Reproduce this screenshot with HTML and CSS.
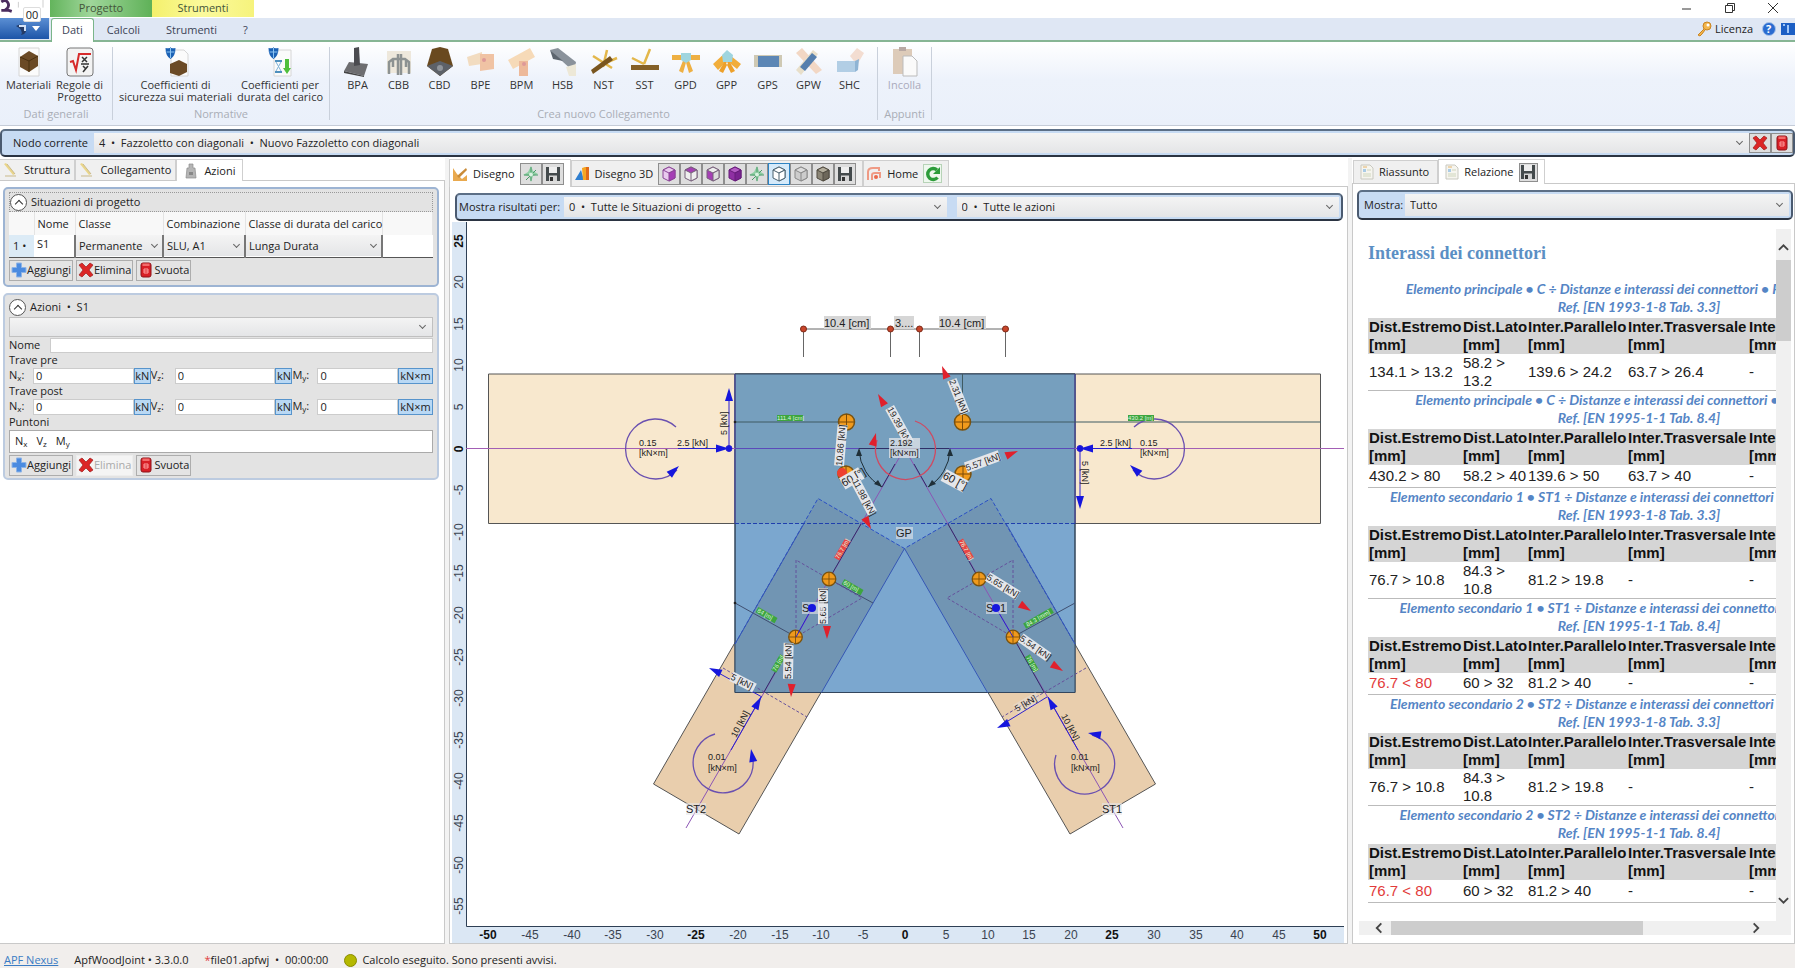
FILE: index.html
```html
<!DOCTYPE html>
<html lang="it">
<head>
<meta charset="UTF-8">
<title>ApfWoodJoint</title>
<link rel="stylesheet" href="styles.css">
</head>
<body>

<!-- shared icons -->
<svg class="defs" aria-hidden="true">
  <symbol id="i-x" viewBox="0 0 16 16"><path d="M1 3l3-2 4 4 4-4 3 2-4 5 4 5-3 2-4-4-4 4-3-2 4-5z" fill="#dc2626" stroke="#9c1c1c" stroke-width=".7"/></symbol>
  <symbol id="i-bin" viewBox="0 0 16 16"><rect x="3" y="1" width="10" height="14" rx="2" fill="#d81f26" stroke="#8d1218"/><rect x="4.500" y="1.500" width="7" height="2.500" fill="#f36b6b"/><path d="M6 7h4v4H6zM6 9h4" fill="none" stroke="#ff9d9d"/></symbol>
  <symbol id="i-plus" viewBox="0 0 16 16"><path d="M5.500 1h5v4.500H15v5h-4.500V15h-5v-4.500H1v-5h4.500z" fill="#4b8be0" stroke="#8fb4e6"/></symbol>
  <symbol id="i-save" viewBox="0 0 16 16"><path d="M1 1h14v14H1z" fill="#444a4c"/><path d="M4 1h8v6H4z" fill="#eee"/><path d="M4 9.500h8V15H4z" fill="#d5d5d5"/><path d="M5 11h3v4H5z" fill="#333"/></symbol>
  <symbol id="i-axes" viewBox="0 0 16 16"><path d="M8 0l2 5 5 3-5 2-2 6-2-6-6-1 5-3z" fill="#8fcfa4"/><path d="M8 1v14M1 9h14M3 14L13 4" stroke="#4c9a6b" fill="none"/><circle cx="8" cy="8.500" r="2" fill="#d8f2e0"/></symbol>
  <symbol id="i-cube" viewBox="0 0 16 16"><path d="M2 4l6-3 6 3v8l-6 3-6-3z" fill="var(--side)" stroke="var(--edge)"/><path d="M2 4l6-3 6 3-6 3z" fill="var(--top)" stroke="var(--edge)"/><path d="M8 7l6-3v8l-6 3z" fill="var(--face)" stroke="var(--edge)"/></symbol>
  <symbol id="i-ruler" viewBox="0 0 16 16"><path d="M3 1l9 11-2 1L1 2z" fill="#ead68a"/><path d="M13 14H2M12 12L4 2" stroke="#c9b98a" fill="none"/></symbol>
  <symbol id="i-weight" viewBox="0 0 16 16"><path d="M6 1h4v4h2l1 10H3L4 5h2z" fill="#b5b5b5" stroke="#8d8d8d" stroke-width=".7"/><path d="M6 9h4v3H6z" fill="#888"/></symbol>
  <symbol id="i-doc" viewBox="0 0 16 16"><path d="M2 1h9l3 3v11H2z" fill="#f6f5ef" stroke="#c9c9c0"/><path d="M4 5h3v3H4z" fill="#a9cbe6"/><path d="M8 6h4M4 10h8M4 12h8" stroke="#cfd6bd"/><path d="M4 3h4" stroke="#e3b46c"/></symbol>
  <symbol id="i-draw" viewBox="0 0 16 16"><path d="M1 2v13h14V9l-5 4-5-5z" fill="#e9a94e"/><path d="M5 10L14 2l1 2-8 8z" fill="#c98b38"/></symbol>
  <symbol id="i-3d" viewBox="0 0 16 16"><path d="M1 14l6-10 3 10z" fill="#2f7fd0"/><path d="M8 2l3-1h4v13H9z" fill="#f5a623"/><path d="M12 1h3v13h-3z" fill="#e06a1a"/></symbol>
  <symbol id="i-home" viewBox="0 0 16 16"><path d="M2 14V6q0-4 5-4h6v3M6 14V9q0-2 3-2h5v5" fill="none" stroke="#ef9a84" stroke-width="2"/><circle cx="10" cy="11" r="2" fill="#ea6a4c"/></symbol>
  <symbol id="i-reload" viewBox="0 0 16 16"><path d="M12.500 11.500A5.500 5.500 0 1 1 12 4" fill="none" stroke="#2d9c3a" stroke-width="3.400"/><path d="M15 1v7H8z" fill="#2d9c3a"/></symbol>
  <symbol id="i-shield" viewBox="0 0 10 12"><path d="M0 1q5 1 5-1 0 2 5 1 0 8-5 11Q0 9 0 1z" fill="#1c62b5"/><path d="M5 1v10M1 5h8" stroke="#8cc4f2"/></symbol>
</svg>

<header class="titlebar">
  <svg class="app-mark" viewBox="0 0 50 19"><path d="M0 2q5-3 7 1t-2 7l6 2M0 11h8" fill="none" stroke="#4a2b5e" stroke-width="3"/><path d="M18 2v6M44 0v8" stroke="#ccc"/></svg>
  <span class="ctx ctx-green">Progetto</span>
  <span class="ctx ctx-yellow">Strumenti</span>
  <div class="win-buttons">
    <button aria-label="Riduci"><svg viewBox="0 0 12 12"><path d="M1 7h9" stroke="#333"/></svg></button>
    <button aria-label="Ripristina"><svg viewBox="0 0 12 12"><path d="M1.500 3.500h7v7h-7zM3.500 3V1.500h7v7H9" fill="none" stroke="#333"/></svg></button>
    <button aria-label="Chiudi"><svg viewBox="0 0 12 12"><path d="M1 1l10 10M11 1L1 11" stroke="#333"/></svg></button>
  </div>
</header>

<nav class="tabstrip">
  <button class="file-btn" aria-label="File"><svg viewBox="0 0 30 14"><path d="M2 4q6-4 10 2 1 6-5 7 3-5-5-9z" fill="#243b66"/><path d="M5 4h6v5" fill="none" stroke="#d3e1f6" stroke-width="2"/><path d="M18 4h8l-4 5z" fill="#fff"/></svg></button>
  <span class="keytip">00</span>
  <button class="rtab active">Dati</button>
  <button class="rtab">Calcoli</button>
  <button class="rtab">Strumenti</button>
  <button class="rtab">?</button>
  <div class="strip-right">
    <svg class="ico" viewBox="0 0 16 16"><circle cx="10" cy="5" r="4" fill="#f3b64c" stroke="#c98420"/><circle cx="11" cy="4" r="1.500" fill="#fff"/><path d="M7 8l-6 6 2 1 2-2 3-4" fill="#f3b64c" stroke="#c98420"/></svg>
    <a href="#licenza">Licenza</a>
    <svg class="ico" viewBox="0 0 16 16"><circle cx="8" cy="8" r="6.500" fill="#2a6bd0" stroke="#a9c4ea"/><text x="5" y="12" fill="#fff" font-size="11" font-weight="bold">?</text></svg>
    <svg class="ico" viewBox="0 0 16 16"><path d="M2 2h14v12H2z" fill="#1c5fc4"/><path d="M9 4v8M4 4h2" stroke="#9fc6f7" stroke-width="2"/></svg>
  </div>
</nav>

<section class="ribbon">
  <div class="rgroup g-dati">
    <div class="items">
      <button class="big"><svg viewBox="0 0 30 30"><path d="M5 1h20v28H5z" fill="#fbfbfb" stroke="#d6d6d6"/><path d="M6 10l9-6 9 5v10l-9 6-9-5z" fill="#6b4a25"/><path d="M6 10l9 4 9-5M15 14v11" stroke="#49300f" fill="none"/></svg>Materiali</button>
      <button class="big"><svg viewBox="0 0 30 30"><rect x="2" y="1" width="26" height="28" rx="3" fill="#f3f3f3" stroke="#777"/><path d="M5 15l3-1 3 9L14 7h12" fill="none" stroke="#d62a2a" stroke-width="2"/><path d="M17 10l5 5M22 10l-5 5M16 17h8M18 19l3 3M23 19l-5 6" stroke="#333" stroke-width="1.500"/></svg>Regole di<br>Progetto</button>
    </div>
    <div class="gname">Dati generali</div>
  </div>
  <div class="rgroup g-norm">
    <div class="items">
      <button class="big"><svg viewBox="0 0 30 30"><path d="M10 3h13l4 4v22H10z" fill="#fbfbfb" stroke="#d6d6d6"/><path d="M9 17l9-4 8 4v8l-8 4-9-3z" fill="#6b4a25"/><use href="#i-shield" x="4" width="11" height="12"/></svg>Coefficienti di<br>sicurezza sui materiali</button>
      <button class="big"><svg viewBox="0 0 30 30"><path d="M9 3h17v26H9z" fill="#fbfbfb" stroke="#d6d6d6"/><path d="M10 14h7M10 25h7" stroke="#4e8fbd" stroke-width="2"/><path d="M11 15l5 9M16 15l-5 9" stroke="#7fb3d8"/><path d="M20 12h4v9h2l-4 6-4-6h2z" fill="#4fbf3c"/><use href="#i-shield" x="3" width="11" height="12"/></svg>Coefficienti per<br>durata del carico</button>
    </div>
    <div class="gname">Normative</div>
  </div>
  <div class="rgroup g-crea">
    <div class="items">
      <button><svg viewBox="0 0 30 30"><path d="M1 24l5-9 19 2-4 12z" fill="#6d6d70"/><path d="M1 24l20 5v1L1 26z" fill="#444"/><path d="M11 1l5-1 1 18-6 1z" fill="#4b4b50"/></svg>BPA</button>
      <button><svg viewBox="0 0 30 30"><path d="M3 4h24v22H3z" fill="#eee8dc"/><path d="M14 7v21M17 7v21M5 27V15l4-3h12l4 3v12M9 12v8M22 12v8" fill="none" stroke="#8d9292" stroke-width="2.500"/></svg>CBB</button>
      <button><svg viewBox="0 0 30 30"><path d="M7 2l8-2 8 2 5 17-13 10L2 19z" fill="#69491f"/><path d="M2 19l13-5 13 5-13 10z" fill="#5d6168"/><circle cx="15" cy="21" r="3" fill="#90949a"/></svg>CBD</button>
      <button><svg viewBox="0 0 30 30"><path d="M1 10l15-5v12L3 19z" fill="#f2dcc0"/><path d="M14 7h14v15l-14 2z" fill="#f0c3a4"/><circle cx="18" cy="13" r="2" fill="#d99"/></svg>BPE</button>
      <button><svg viewBox="0 0 30 30"><path d="M1 13L23 1l5 9L6 22z" fill="#f6dab8"/><path d="M12 14h9v15h-9z" fill="#edb99a"/><circle cx="17" cy="17" r="2" fill="#d99"/></svg>BPM</button>
      <button><svg viewBox="0 0 30 30"><path d="M2 3l8-2 18 14-2 10z" fill="#8a929b"/><path d="M2 3l3 9 10 2" fill="#5d656e"/><path d="M18 20l10-3v12h-7z" fill="#ede8d7"/></svg>HSB</button>
      <button><svg viewBox="0 0 30 30"><path d="M4 9l19 12M14 20l4-17M12 18l16-7" stroke="#e3b74b" stroke-width="2.500"/><path d="M2 23l19-14 3 4L4 27z" fill="#79551f"/></svg>NST</button>
      <button><svg viewBox="0 0 30 30"><path d="M1 18h28v5H1z" fill="#846028"/><path d="M2 11l12 6M14 17l6-15" stroke="#e3b74b" stroke-width="2.500"/></svg>SST</button>
      <button><svg viewBox="0 0 30 30"><path d="M1 8h28v5H1zM8 24l5-13 3 1-4 14zM22 24l-5-13-3 1 4 14z" fill="#eeb043"/><path d="M10 6h10v7l-5 3-5-3z" fill="#9fd5df"/></svg>GPD</button>
      <button><svg viewBox="0 0 30 30"><path d="M1 17L14 5l15 12-4 5-10-8-9 9z" fill="#f1ad3b"/><path d="M7 24l6-10 3 2-5 10zM23 24l-6-10-3 2 5 10z" fill="#eda02a"/><path d="M10 8l5-5 6 5-1 7h-9z" fill="#9fd5df"/></svg>GPP</button>
      <button><svg viewBox="0 0 30 30"><path d="M1 8h28v12H1z" fill="#cfc9b4"/><path d="M5 9h21v11H5z" fill="#5c86b5"/></svg>GPS</button>
      <button><svg viewBox="0 0 30 30"><path d="M8 1l20 22-6 4L2 6z" fill="#f2d7c4"/><path d="M2 23L19 3l5 4L7 28z" fill="#e8dfca"/><path d="M6 20L18 6l5 4-12 14z" fill="#557fae"/></svg>GPW</button>
      <button><svg viewBox="0 0 30 30"><path d="M15 9l7-8 7 5-7 12z" fill="#f3ddd1"/><path d="M2 14h18v11H2z" fill="#b2cee5"/><path d="M20 14l4-2-1 11-3 2z" fill="#8fb4d4"/></svg>SHC</button>
    </div>
    <div class="gname">Crea nuovo Collegamento</div>
  </div>
  <div class="rgroup g-app">
    <div class="items">
      <button disabled><svg viewBox="0 0 30 30"><path d="M3 2h19v25H3z" fill="#ddcbb9"/><path d="M9 0h7v4H9z" fill="#b9a9a4"/><path d="M13 9h9l5 5v15H13z" fill="#fafafa" stroke="#bbb"/></svg>Incolla</button>
    </div>
    <div class="gname">Appunti</div>
  </div>
</section>

<div class="bar node-bar">
  <label for="nodo">Nodo corrente</label>
  <span class="combo grow"><select id="nodo"><option>4 &nbsp;• &nbsp;Fazzoletto con diagonali &nbsp;• &nbsp;Nuovo Fazzoletto con diagonali</option></select></span>
  <button class="sq" aria-label="Elimina nodo"><svg class="ico"><use href="#i-x"/></svg></button>
  <button class="sq" aria-label="Svuota nodi"><svg class="ico"><use href="#i-bin"/></svg></button>
</div>

<main class="work">

  <section class="pane pane-left">
    <div class="tabs">
      <button class="tab"><svg class="ico"><use href="#i-ruler"/></svg>Struttura</button>
      <button class="tab"><svg class="ico"><use href="#i-ruler"/></svg>Collegamento</button>
      <button class="tab active"><svg class="ico"><use href="#i-weight"/></svg>Azioni</button>
    </div>
    <div class="page">
      <div class="box">
        <div class="box-head dotted"><button class="round" aria-label="Comprimi"></button>Situazioni di progetto</div>
        <table class="grid">
          <tr><th class="c-n"></th><th class="c-nome">Nome</th><th class="c-cl">Classe</th><th class="c-co">Combinazione</th><th class="c-du">Classe di durata del carico</th><th></th></tr>
          <tr>
            <td class="num">1 •</td>
            <td><input type="text" aria-label="Nome situazione" value="S1"></td>
            <td><span class="combo"><select aria-label="Classe"><option>Permanente</option></select></span></td>
            <td><span class="combo"><select aria-label="Combinazione"><option>SLU, A1</option></select></span></td>
            <td><span class="combo"><select aria-label="Classe di durata del carico"><option>Lunga Durata</option></select></span></td>
            <td></td>
          </tr>
        </table>
        <div class="btns">
          <button class="btn"><svg class="ico"><use href="#i-plus"/></svg>Aggiungi</button>
          <button class="btn"><svg class="ico"><use href="#i-x"/></svg>Elimina</button>
          <button class="btn"><svg class="ico"><use href="#i-bin"/></svg>Svuota</button>
        </div>
      </div>

      <div class="box plain">
        <div class="box-head"><button class="round" aria-label="Comprimi"></button>Azioni &nbsp;• &nbsp;S1</div>
        <span class="combo wide"><select aria-label="Azione"><option></option></select></span>
        <div class="name-row"><label for="nome">Nome</label><input id="nome" type="text"></div>
        <div class="sub">Trave pre</div>
        <div class="forces">
          <label for="n1">N<sub>x</sub>:</label><input id="n1" type="text" value="0"><button class="unit">kN</button>
          <label for="v1">V<sub>z</sub>:</label><input id="v1" type="text" value="0"><button class="unit">kN</button>
          <label for="m1">M<sub>y</sub>:</label><input id="m1" type="text" value="0"><button class="unit">kN×m</button>
        </div>
        <div class="sub">Trave post</div>
        <div class="forces">
          <label for="n2">N<sub>x</sub>:</label><input id="n2" type="text" value="0"><button class="unit">kN</button>
          <label for="v2">V<sub>z</sub>:</label><input id="v2" type="text" value="0"><button class="unit">kN</button>
          <label for="m2">M<sub>y</sub>:</label><input id="m2" type="text" value="0"><button class="unit">kN×m</button>
        </div>
        <div class="sub">Puntoni</div>
        <div class="puntoni"><span>N<sub>x</sub></span><span>V<sub>z</sub></span><span>M<sub>y</sub></span></div>
        <div class="btns">
          <button class="btn"><svg class="ico"><use href="#i-plus"/></svg>Aggiungi</button>
          <button class="btn" disabled><svg class="ico"><use href="#i-x"/></svg>Elimina</button>
          <button class="btn"><svg class="ico"><use href="#i-bin"/></svg>Svuota</button>
        </div>
      </div>
    </div>
  </section>

  <section class="pane pane-center">
    <div class="tabs">
      <div class="tab active"><svg class="ico"><use href="#i-draw"/></svg>Disegno
        <span class="tools"><button class="sq" aria-label="Assi"><svg class="ico"><use href="#i-axes"/></svg></button><button class="sq" aria-label="Salva"><svg class="ico"><use href="#i-save"/></svg></button></span>
      </div>
      <div class="tab"><svg class="ico"><use href="#i-3d"/></svg>Disegno 3D
        <span class="tools">
          <button class="sq cube-front" aria-label="Vista fronte"><svg class="ico"><use href="#i-cube"/></svg></button>
          <button class="sq cube-top" aria-label="Vista alto"><svg class="ico"><use href="#i-cube"/></svg></button>
          <button class="sq cube-left" aria-label="Vista lato"><svg class="ico"><use href="#i-cube"/></svg></button>
          <button class="sq cube-full" aria-label="Vista 3D"><svg class="ico"><use href="#i-cube"/></svg></button>
          <button class="sq" aria-label="Assi"><svg class="ico"><use href="#i-axes"/></svg></button>
          <button class="sq on cube-wire" aria-label="Spigoli"><svg class="ico"><use href="#i-cube"/></svg></button>
          <button class="sq cube-ghost" aria-label="Trasparente"><svg class="ico"><use href="#i-cube"/></svg></button>
          <button class="sq cube-solid" aria-label="Solido"><svg class="ico"><use href="#i-cube"/></svg></button>
          <button class="sq" aria-label="Salva"><svg class="ico"><use href="#i-save"/></svg></button>
        </span>
      </div>
      <div class="tab"><svg class="ico"><use href="#i-home"/></svg>Home
        <span class="tools"><button class="sq light" aria-label="Ricarica"><svg class="ico"><use href="#i-reload"/></svg></button></span>
      </div>
    </div>
    <div class="page">
      <div class="bar results-bar">
        <label for="sit">Mostra risultati per:</label>
        <span class="combo"><select id="sit"><option>0 &nbsp;• &nbsp;Tutte le Situazioni di progetto &nbsp;- &nbsp;-</option></select></span>
        <span class="combo"><select aria-label="Azioni mostrate"><option>0 &nbsp;• &nbsp;Tutte le azioni</option></select></span>
      </div>
      <div class="canvas">
      <svg class="drawing" viewBox="450 222 897 721">
        <defs>
          <marker id="dot" viewBox="0 0 6 6" refX="3" refY="3" markerWidth="4" markerHeight="4"><circle cx="3" cy="3" r="2" fill="#222"/></marker>
          <path id="arr" d="M0 0L-13 -4V4z"/>
          <g id="bolt"><circle r="8" fill="#f09a1c" stroke="#7a5310" stroke-width="1.500"/><path d="M-8 0H8M0-8V8" stroke="#7a4a08"/></g>
        </defs>

        <!-- rulers -->
        <path class="ruler" d="M452 222h14v704h878v17H452z"/>
        <path d="M466.500 222v704.500H1344" fill="none" stroke="#2e3f55"/>
        <g class="ticks v" text-anchor="middle">
          <text class="b" transform="translate(463 241) rotate(-90)">25</text>
          <text transform="translate(463 282) rotate(-90)">20</text>
          <text transform="translate(463 324) rotate(-90)">15</text>
          <text transform="translate(463 365) rotate(-90)">10</text>
          <text transform="translate(463 407) rotate(-90)">5</text>
          <text class="b" transform="translate(463 449) rotate(-90)">0</text>
          <text transform="translate(463 490) rotate(-90)">-5</text>
          <text transform="translate(463 532) rotate(-90)">-10</text>
          <text transform="translate(463 573) rotate(-90)">-15</text>
          <text transform="translate(463 615) rotate(-90)">-20</text>
          <text transform="translate(463 657) rotate(-90)">-25</text>
          <text transform="translate(463 698) rotate(-90)">-30</text>
          <text transform="translate(463 740) rotate(-90)">-35</text>
          <text transform="translate(463 781) rotate(-90)">-40</text>
          <text transform="translate(463 823) rotate(-90)">-45</text>
          <text transform="translate(463 865) rotate(-90)">-50</text>
          <text transform="translate(463 906) rotate(-90)">-55</text>
        </g>
        <g class="ticks" text-anchor="middle">
          <text class="b" x="488" y="939">-50</text><text x="530" y="939">-45</text><text x="572" y="939">-40</text><text x="613" y="939">-35</text><text x="655" y="939">-30</text>
          <text class="b" x="696" y="939">-25</text><text x="738" y="939">-20</text><text x="780" y="939">-15</text><text x="821" y="939">-10</text><text x="863" y="939">-5</text>
          <text class="b" x="905" y="939">0</text><text x="946" y="939">5</text><text x="988" y="939">10</text><text x="1029" y="939">15</text><text x="1071" y="939">20</text>
          <text class="b" x="1112" y="939">25</text><text x="1154" y="939">30</text><text x="1196" y="939">35</text><text x="1237" y="939">40</text><text x="1279" y="939">45</text><text class="b" x="1320" y="939">50</text>
        </g>

        <!-- members and gusset plate -->
        <path d="M488.500 374h832v149.500h-832z" fill="#f8e8ce" stroke="#555"/>
        <path d="M991 498.500L1155.500 784 1070 834 904.500 548.500z" fill="#e9cead" stroke="#555"/>
        <path d="M818 498.500L653.500 784 739 834 904.500 548.500z" fill="#e9cead" stroke="#555"/>
        <path d="M735 374h340v318.500H735z" fill="#7ba7cf" stroke="#345"/>
        <path d="M735 374h340v149.500H735z" fill="#769fbe"/>
        <path d="M991 498.500L1075 644v48.500h-87L904.500 548.500z" fill="#7195b3"/>
        <path d="M818 498.500L735 644v48.500h86.500L904.500 548.500z" fill="#7195b3"/>
        <path d="M735 374h340v318.500H735z" fill="none" stroke="#33465e"/>
        <path d="M735 374v149.500M1075 374v149.500" stroke="#4b3f9c"/>
        <g fill="none" stroke="#2a4fc4" stroke-dasharray="4 2">
          <path d="M735 644L818 498.500 904.500 548.500 991 498.500 1075 644"/>
          <path d="M735 523.500h340" stroke="#1f3fae"/>
        </g>
        <path d="M904.500 548.500L821.500 692.500M904.500 548.500L987.500 692.500M735 644L804 523.500M1075 644L1006 523.500" fill="none" stroke="#3556b4"/>

        <!-- axes -->
        <path d="M466 448.500h878" stroke="#a35fb5"/>
        <path d="M735 448.500h340" stroke="#5b4aba"/>
        <path d="M904.500 448.500L1123 828M904.500 448.500L686 828" stroke="#8c55b4"/>
        <path d="M859 448.500h90M895 464l-13 23M914 464l13 23M861 524l-32 55M948 524l31 55M795 637l-31 55M1013 637l31 55" stroke="#2f2f68" fill="none"/>

        <!-- dimension lines -->
        <g stroke="#666" fill="none">
          <path d="M803.500 329h202M803.500 329v28M890.500 329v28M919.500 329v28M1005.500 329v28"/>
          <path d="M735 422h104M971 422h350M962.500 374v40" stroke="#3f5a62" marker-start="url(#dot)" marker-end="url(#dot)"/>
          <path d="M735 603l61 34M829 579l44 24M1013 637l62-34" stroke="#3f4f70" marker-start="url(#dot)"/>
        </g>
        <g fill="#c8452a" stroke="#7d2a18"><circle cx="803.500" cy="329" r="3"/><circle cx="890.500" cy="329" r="3"/><circle cx="919.500" cy="329" r="3"/><circle cx="1005.500" cy="329" r="3"/></g>
        <g class="tag">
          <path d="M824 316h47v13h-47zM894 316h20v13h-20zM939 316h47v13h-47z" fill="#d6d6d6"/>
          <text x="824" y="327">10.4 [cm]</text><text x="895" y="327">3....</text><text x="939" y="327">10.4 [cm]</text>
        </g>

        <!-- dashed triangles -->
        <path d="M796 560v77l66-39zM1013 560v77l-66-39zM723 668l84 49M1086 668l-84 49" fill="none" stroke="#65509c" stroke-dasharray="3 2"/>

        <!-- moments -->
        <g fill="none" stroke="#6a50b0" stroke-width="1.300">
          <path d="M676 427a30 30 0 1 0 1 43"/><path d="M1134 427a30 30 0 1 1-1 43"/>
          <path d="M715 734a30 30 0 1 0 38 26"/>
          <path d="M1056 755a30 30 0 1 0 36-20"/>
          <path d="M877 440a30 30 0 1 0 38-19" stroke="#cf4a62"/>
        </g>
        <path d="M859 450a45 45 0 0 0 23 37M950 450a45 45 0 0 1-22 37" fill="none" stroke="#1f2f38"/>
        <g fill="#1f2f38"><path d="M859 448l-3 8h6zM950 448l-3 8h6zM882 487l-8-3 4-4zM928 487l8-3-4-4z"/></g>

        <!-- bolts -->
        <use href="#bolt" x="846.500" y="422"/><use href="#bolt" x="962.500" y="422"/>
        <use href="#bolt" x="846" y="474"/><use href="#bolt" x="963" y="474"/>
        <circle cx="842" cy="473" r="5" fill="#ee4030"/>
        <g transform="translate(829 579) scale(.85)"><use href="#bolt"/></g><g transform="translate(979 579) scale(.85)"><use href="#bolt"/></g>
        <g transform="translate(795.500 637) scale(.85)"><use href="#bolt"/></g><g transform="translate(1013 637) scale(.85)"><use href="#bolt"/></g>

        <!-- loads -->
        <g stroke="#2a1fd0" fill="#1616dd">
          <path d="M729 448v-48M678 448.500h50M1080 448v50M1132 448.500h-50"/>
          <circle cx="729" cy="448.500" r="3"/><circle cx="1080" cy="448.500" r="3"/>
          <path d="M812 608l-16 29M996 608l17 29M731 750l30-53M1078 750l-30-53M762 697l-47-26M1047 697l-44 27" fill="none"/>
        </g>
        <g fill="#1616dd">
          <use href="#arr" transform="translate(729 388) rotate(-90)"/><use href="#arr" transform="translate(729 448.500)"/>
          <use href="#arr" transform="translate(1080 509) rotate(90)"/><use href="#arr" transform="translate(1080 448.500) rotate(180)"/>
          <use href="#arr" transform="translate(679 466) rotate(-42)"/><use href="#arr" transform="translate(1130 465) rotate(222)"/>
          <use href="#arr" transform="translate(709 668) rotate(205)"/><use href="#arr" transform="translate(997 728) rotate(155)"/>
          <use href="#arr" transform="translate(761 697) rotate(-62)"/><use href="#arr" transform="translate(1048 697) rotate(-118)"/>
          <use href="#arr" transform="translate(751 749) rotate(-100)"/><use href="#arr" transform="translate(1088 733) rotate(190)"/>
        </g>
        <g fill="#e0202c">
          <use href="#arr" transform="translate(942 366) rotate(-112)"/><use href="#arr" transform="translate(878 394) rotate(-120)"/>
          <use href="#arr" transform="translate(876 433) rotate(-75)"/><use href="#arr" transform="translate(1018 451) rotate(-22)"/>
          <use href="#arr" transform="translate(871 529) rotate(62)"/><use href="#arr" transform="translate(827 639) rotate(90)"/>
          <use href="#arr" transform="translate(791 697) rotate(93)"/><use href="#arr" transform="translate(1031 611) rotate(32)"/>
          <use href="#arr" transform="translate(1063 671) rotate(32)"/>
        </g>

        <!-- tiny green and red distance labels -->
        <g class="mini">
          <g transform="translate(790 419)"><path d="M-13-4h26v6h-26z" fill="#3da53f"/><text x="-13" y="1">111.4 [cm]</text></g>
          <g transform="translate(1141 419)"><path d="M-13-4h26v6h-26z" fill="#3da53f"/><text x="-13" y="1">430.2 [m]</text></g>
          <g transform="translate(852 588) rotate(30)"><path d="M-11-4h22v6h-22z" fill="#3da53f"/><text x="-10" y="1">60 [m]</text></g>
          <g transform="translate(766 616) rotate(30)"><path d="M-11-4h22v6h-22z" fill="#3da53f"/><text x="-10" y="1">84 [m]</text></g>
          <g transform="translate(1039 619) rotate(-30)"><path d="M-16-4h32v6h-32z" fill="#3da53f"/><text x="-14" y="1">84.3 [mm]</text></g>
          <g transform="translate(779 664) rotate(-60)"><path d="M-9-4H9v6H-9z" fill="#3da53f"/><text x="-8" y="1">76 [m]</text></g>
          <g transform="translate(1031 664) rotate(60)"><path d="M-9-4H9v6H-9z" fill="#3da53f"/><text x="-8" y="1">76 [m]</text></g>
          <g transform="translate(843 550) rotate(-60)"><path d="M-11-4h22v6h-22z" fill="#e84545"/><text x="-10" y="1">76.7 [m]</text></g>
          <g transform="translate(965 550) rotate(60)"><path d="M-11-4h22v6h-22z" fill="#e84545"/><text x="-10" y="1">76.7 [m]</text></g>
        </g>

        <!-- load labels -->
        <g class="load">
          <text x="639" y="446">0.15</text><text x="639" y="456">[kN×m]</text><text x="677" y="446">2.5 [kN]</text>
          <text x="1100" y="446">2.5 [kN]</text><text x="1140" y="446">0.15</text><text x="1140" y="456">[kN×m]</text>
          <text transform="translate(727 435) rotate(-90)">5 [kN]</text>
          <text transform="translate(1082 461) rotate(90)">5 [kN]</text>
          <text x="708" y="760">0.01</text><text x="708" y="771">[kN×m]</text>
          <text x="1071" y="760">0.01</text><text x="1071" y="771">[kN×m]</text>
          <text transform="translate(736 738) rotate(-62)">10 [kN]</text>
          <text transform="translate(1061 716) rotate(62)">10 [kN]</text>
          <g transform="translate(730 679) rotate(27)"><path d="M0-8h26V2H0z"/><text>5 [kN]</text></g>
          <g transform="translate(1017 712) rotate(-30)"><path d="M0-8h26V2H0z" fill-opacity=".4"/><text>5 [kN]</text></g>
          <g transform="translate(949 381) rotate(68)"><path d="M0-8h36V2H0z"/><text>2.31 [kN]</text></g>
          <g transform="translate(887 409) rotate(61)"><path d="M0-8h41V2H0z"/><text>19.39 [kN]</text></g>
          <g transform="translate(842 466) rotate(-85)"><path d="M0-8h41V2H0z"/><text>10.86 [kN]</text></g>
          <g transform="translate(844 487) rotate(-30)"><path d="M0-10h22V3H0z"/><text class="deg">60 [°]</text></g>
          <g transform="translate(852 481) rotate(62)"><path d="M0-8h38V2H0z"/><text>11.98 [kN]</text></g>
          <g transform="translate(967 471) rotate(-20)"><path d="M0-9h36V2H0z"/><text>5.57 [kN]</text></g>
          <g transform="translate(942 478) rotate(28)"><path d="M0-10h25V3H0z"/><text class="deg">60 [°]</text></g>
          <g transform="translate(826 624) rotate(-90)"><path d="M0-8h36V2H0z"/><text>5.65 [kN]</text></g>
          <g transform="translate(791 679) rotate(-89)"><path d="M0-8h36V2H0z"/><text>5.54 [kN]</text></g>
          <g transform="translate(986 579) rotate(32)"><path d="M0-8h36V2H0z"/><text>5.65 [kN]</text></g>
          <g transform="translate(1019 640) rotate(35)"><path d="M0-8h34V2H0z"/><text>5.54 [kN]</text></g>
          <path d="M889 438h31v20h-31z" fill-opacity=".75"/><text x="890" y="446">2.192</text><text x="890" y="456">[kN×m]</text>
        </g>
        <g class="tag">
          <path d="M896 527h17v12h-17zM802 602h22v12h-22zM986 602h21v12h-21zM686 803h20v12h-20zM1102 803h20v12h-20z" fill="#e6e6ea" fill-opacity=".6"/>
          <text x="896" y="537">GP</text><text x="802" y="612">S</text><text x="986" y="612">S</text><text x="1000" y="612">1</text><text x="686" y="813">ST2</text><text x="1102" y="813">ST1</text>
          <circle cx="812" cy="608" r="4" fill="#1616dd"/><circle cx="996" cy="608" r="4" fill="#1616dd"/>
        </g>
      </svg>
      </div>
    </div>
  </section>

  <section class="pane pane-right">
    <div class="tabs">
      <div class="tab"><svg class="ico"><use href="#i-doc"/></svg>Riassunto</div>
      <div class="tab active"><svg class="ico"><use href="#i-doc"/></svg>Relazione
        <span class="tools"><button class="sq" aria-label="Salva"><svg class="ico"><use href="#i-save"/></svg></button></span>
      </div>
    </div>
    <div class="page">
      <div class="bar show-bar">
        <label for="mostra">Mostra:</label>
        <span class="combo grow"><select id="mostra"><option>Tutto</option></select></span>
      </div>
      <div class="report">
        <div class="doc">
          <h1>Interassi dei connettori</h1>
          <table class="rep">
            <caption>Elemento principale • C ÷ Distanze e interassi dei connettori • Piastra in acciaio<br>Ref. [EN 1993-1-8 Tab. 3.3]</caption>
            <tr><th>Dist.Estremo<br>[mm]</th><th>Dist.Lato<br>[mm]</th><th>Inter.Parallelo<br>[mm]</th><th>Inter.Trasversale<br>[mm]</th><th>Inter.Diagonale<br>[mm]</th></tr>
            <tr><td>134.1 &gt; 13.2</td><td>58.2 &gt; 13.2</td><td>139.6 &gt; 24.2</td><td>63.7 &gt; 26.4</td><td>-</td></tr>
          </table>
          <table class="rep">
            <caption>Elemento principale • C ÷ Distanze e interassi dei connettori • Trave in legno<br>Ref. [EN 1995-1-1 Tab. 8.4]</caption>
            <tr><th>Dist.Estremo<br>[mm]</th><th>Dist.Lato<br>[mm]</th><th>Inter.Parallelo<br>[mm]</th><th>Inter.Trasversale<br>[mm]</th><th>Inter.Diagonale<br>[mm]</th></tr>
            <tr><td>430.2 &gt; 80</td><td>58.2 &gt; 40</td><td>139.6 &gt; 50</td><td>63.7 &gt; 40</td><td>-</td></tr>
          </table>
          <table class="rep">
            <caption>Elemento secondario 1 • ST1 ÷ Distanze e interassi dei connettori • Piastra in acciaio<br>Ref. [EN 1993-1-8 Tab. 3.3]</caption>
            <tr><th>Dist.Estremo<br>[mm]</th><th>Dist.Lato<br>[mm]</th><th>Inter.Parallelo<br>[mm]</th><th>Inter.Trasversale<br>[mm]</th><th>Inter.Diagonale<br>[mm]</th></tr>
            <tr><td>76.7 &gt; 10.8</td><td>84.3 &gt; 10.8</td><td>81.2 &gt; 19.8</td><td>-</td><td>-</td></tr>
          </table>
          <table class="rep">
            <caption>Elemento secondario 1 • ST1 ÷ Distanze e interassi dei connettori • Trave in legno<br>Ref. [EN 1995-1-1 Tab. 8.4]</caption>
            <tr><th>Dist.Estremo<br>[mm]</th><th>Dist.Lato<br>[mm]</th><th>Inter.Parallelo<br>[mm]</th><th>Inter.Trasversale<br>[mm]</th><th>Inter.Diagonale<br>[mm]</th></tr>
            <tr><td class="bad">76.7 &lt; 80</td><td>60 &gt; 32</td><td>81.2 &gt; 40</td><td>-</td><td>-</td></tr>
          </table>
          <table class="rep">
            <caption>Elemento secondario 2 • ST2 ÷ Distanze e interassi dei connettori • Piastra in acciaio<br>Ref. [EN 1993-1-8 Tab. 3.3]</caption>
            <tr><th>Dist.Estremo<br>[mm]</th><th>Dist.Lato<br>[mm]</th><th>Inter.Parallelo<br>[mm]</th><th>Inter.Trasversale<br>[mm]</th><th>Inter.Diagonale<br>[mm]</th></tr>
            <tr><td>76.7 &gt; 10.8</td><td>84.3 &gt; 10.8</td><td>81.2 &gt; 19.8</td><td>-</td><td>-</td></tr>
          </table>
          <table class="rep">
            <caption>Elemento secondario 2 • ST2 ÷ Distanze e interassi dei connettori • Trave in legno<br>Ref. [EN 1995-1-1 Tab. 8.4]</caption>
            <tr><th>Dist.Estremo<br>[mm]</th><th>Dist.Lato<br>[mm]</th><th>Inter.Parallelo<br>[mm]</th><th>Inter.Trasversale<br>[mm]</th><th>Inter.Diagonale<br>[mm]</th></tr>
            <tr><td class="bad">76.7 &lt; 80</td><td>60 &gt; 32</td><td>81.2 &gt; 40</td><td>-</td><td>-</td></tr>
          </table>
        </div>
        <div class="vscroll">
          <svg viewBox="0 0 12 12"><path d="M1 8l5-5 5 5" fill="none" stroke="#444" stroke-width="2"/></svg>
          <i class="thumb"></i>
          <svg viewBox="0 0 12 12"><path d="M1 4l5 5 5-5" fill="none" stroke="#444" stroke-width="2"/></svg>
        </div>
      </div>
      <div class="hscroll">
        <svg viewBox="0 0 12 12"><path d="M8 1L3 6l5 5" fill="none" stroke="#444" stroke-width="2"/></svg>
        <i class="thumb"></i>
        <svg viewBox="0 0 12 12"><path d="M4 1l5 5-5 5" fill="none" stroke="#444" stroke-width="2"/></svg>
      </div>
    </div>
  </section>

</main>

<footer class="status">
  <a href="#nexus">APF Nexus</a>
  <span>ApfWoodJoint • 3.3.0.0</span>
  <span><b class="star">*</b>file01.apfwj &nbsp;• &nbsp;00:00:00</span>
  <span class="state"><i class="led"></i>Calcolo eseguito. Sono presenti avvisi.</span>
</footer>

</body>
</html>
```
FILE: styles.css
```css
@charset "utf-8";

* { box-sizing: border-box; }

body {
    margin: 0;
    height: 100vh;
    display: flex;
    flex-direction: column;
    overflow: hidden;
    background: #fff;
    color: #222;
    font: 11px/14px "Open Sans", "Noto Sans", sans-serif;
}

button, input, select {
    font: inherit;
    color: inherit;
    margin: 0;
    padding: 0;
    border: 0;
    border-radius: 0;
    background: none;
}

.defs { position: absolute; width: 0; height: 0; }
.ico { width: 16px; height: 16px; flex: none; }

/* title bar */
.titlebar {
    display: flex;
    height: 18px;
    flex: none;
}
.app-mark { width: 50px; height: 18px; }
.ctx {
    width: 102px;
    height: 17px;
    line-height: 15px;
    text-align: center;
    color: #44553a;
}
.ctx-green { background: linear-gradient(90deg, #63b45c, #9fd69a 40%, #5fb158); }
.ctx-yellow { background: linear-gradient(90deg, #f4f06c, #fbfa9c 50%, #f6f37c); }
.win-buttons {
    margin-left: auto;
    display: flex;
    gap: 30px;
    padding-right: 16px;
}
.win-buttons button { width: 13px; }
.win-buttons svg { width: 12px; height: 12px; }

/* ribbon tabs */
.tabstrip {
    position: relative;
    display: flex;
    height: 24px;
    flex: none;
    background: #dfe7f4;
    border-bottom: 2px solid #86b594;
}
.file-btn {
    width: 49px;
    height: 21px;
    background: linear-gradient(#5b8fd4, #1d55a8);
    margin-right: 2px;
}
.file-btn svg { width: 30px; height: 14px; margin: 3px 0 0 8px; }
.keytip {
    position: absolute;
    left: 23px;
    top: -11px;
    width: 18px;
    height: 15px;
    text-align: center;
    background: #fff;
    border: 1px solid #ddd;
    border-radius: 2px;
}
.rtab { padding: 4px 13px 2px; color: #3c4356; }
.rtab.active {
    height: 24px;
    padding: 3px 10px 4px;
    background: #fff;
    border: 1px solid #7ab58a;
    border-bottom: 0;
    border-radius: 3px 3px 0 0;
}
.strip-right {
    margin-left: auto;
    display: flex;
    align-items: center;
    gap: 2px;
}
.strip-right a { color: #222; text-decoration: none; margin-right: 6px; }

/* ribbon */
.ribbon {
    display: flex;
    height: 84px;
    flex: none;
    padding-top: 5px;
    background: linear-gradient(#fff, #edf2fb 45%, #eaf0fa);
    border-bottom: 1px solid #c5ccd8;
}
.rgroup {
    display: flex;
    flex-direction: column;
    height: 73px;
    border-right: 1px solid #c9d0db;
}
.items { display: flex; flex: 1; }
.items button {
    width: 41px;
    display: flex;
    flex-direction: column;
    align-items: center;
    justify-content: flex-start;
    line-height: 12px;
    color: #333;
    white-space: nowrap;
}
.items svg { width: 30px; height: 30px; margin-bottom: 2px; flex: none; }
.items button:disabled { color: #aab; }
.gname { text-align: center; color: #a9adb6; line-height: 12px; }
.g-dati { width: 113px; padding-left: 3px; }
.g-dati .items button { width: 51px; }
.g-norm { width: 217px; }
.g-norm .items button:first-child { width: 113px; margin-left: 6px; }
.g-norm .items button:nth-child(2) { width: 96px; }
.g-dati .gname { margin-left: -3px; }
.g-crea { width: 548px; }
.g-crea .items { padding-left: 7px; }
.g-app { width: 54px; }
.g-app .items { justify-content: center; }

/* dark framed bars with a caption and drop-downs */
.bar {
    display: flex;
    flex: none;
    height: 28px;
    padding: 2px;
    background: #c7dbf3;
    border: 2px solid #4a5a70;
    border-top-color: #5c6f86;
    border-bottom-color: #2b3442;
    border-radius: 5px;
}
.bar label { display: flex; align-items: center; }
.node-bar { margin: 3px 0 1px; padding-right: 0; }
.node-bar label { width: 90px; padding-left: 9px; }
.results-bar { margin: 6px 4px 1px 5px; }
.results-bar label { width: 105px; }
.results-bar .combo { flex: 1; }
.results-bar .combo + .combo { margin-left: 10px; }
.show-bar { margin: 6px 1px 0 4px; height: 30px; }
.show-bar label { width: 44px; padding-left: 3px; }

.combo {
    position: relative;
    display: block;
    min-width: 0;
    background: linear-gradient(#f4f4f4, #e4e5e7);
}
.combo.grow { flex: 1; }
.combo select {
    width: 100%;
    height: 100%;
    padding: 0 16px 0 5px;
    appearance: none;
}
.combo::after {
    content: "";
    position: absolute;
    right: 7px;
    top: 50%;
    width: 4px;
    height: 4px;
    margin-top: -4px;
    border: solid #666;
    border-width: 0 1px 1px 0;
    transform: rotate(45deg);
    pointer-events: none;
}

.sq {
    width: 22px;
    height: 22px;
    display: inline-flex;
    align-items: center;
    justify-content: center;
    background: #dedede;
    border: 1px solid #8e8e8e;
}
.sq.on { background: #d5eafa; border-color: #2e83c2; }
.sq.light { background: #eef8ee; border-color: #b7d3b7; width: 19px; height: 19px; }
.node-bar .sq { height: 20px; }
.cube-front { --side: #e9c9ee; --top: #e9c9ee; --face: #a53fb5; --edge: #8a4596; }
.cube-top { --side: #eee; --top: #a53fb5; --face: #eee; --edge: #77607b; }
.cube-left { --side: #a53fb5; --top: #eee; --face: #ddd; --edge: #77607b; }
.cube-full { --side: #8f2fa3; --top: #b45cc4; --face: #7a2390; --edge: #671c7a; }
.cube-wire { --side: #fff; --top: #fff; --face: #fff; --edge: #49606e; }
.cube-ghost { --side: #ccc; --top: #ddd; --face: #ccc; --edge: #888; }
.cube-solid { --side: #8c8677; --top: #b3ad9c; --face: #6d675a; --edge: #504b40; }

/* work area */
.work {
    flex: 1;
    min-height: 0;
    display: grid;
    grid-template-columns: 445px 1fr 443px;
    gap: 4px;
    background: #f3f3f3;
}
.pane { display: flex; flex-direction: column; min-width: 0; min-height: 0; background: #fff; }
.tabs { display: flex; flex: none; align-items: flex-end; }
.tab {
    display: flex;
    align-items: center;
    height: 21px;
    padding: 0 6px 0 2px;
    background: #f0f0f0;
    border: 1px solid #cfcfcf;
    border-bottom: 0;
}
.tab .ico { margin-right: 5px; }
.tab.active { background: #fff; position: relative; margin-bottom: -1px; }
.tools { display: flex; margin-left: 5px; }
.tab .sq .ico { margin: 0; }
.page {
    flex: 1;
    min-height: 0;
    display: flex;
    flex-direction: column;
    border: 1px solid #c9c9c9;
}

.pane-left .tabs { padding-top: 1px; }
.pane-left .tab { padding: 0 4px 0 3px; }
.pane-left .tab:first-child { border-left: 0; }
.pane-left .tab.active { height: 22px; padding: 0 7px 0 6px; }
.pane-left .page { border-left: 0; }

.box {
    margin: 6px 5px 0 3px;
    padding: 3px 4px 4px;
    background: #e3e3e3;
    border: 2px solid #9db4d3;
    border-radius: 5px;
}
.box.plain { margin-top: 6px; padding-bottom: 2px; border-color: #bccbe0; }
.box-head { display: flex; align-items: center; height: 20px; gap: 4px; }
.plain .box-head { height: 19px; }
.dotted { border: 1px dotted #999; }
.round {
    width: 17px;
    height: 17px;
    border: 1px solid #555;
    border-radius: 50%;
    background: #fff;
    display: flex;
    align-items: center;
    justify-content: center;
}
.round::after {
    content: "";
    width: 5px;
    height: 5px;
    margin-top: 3px;
    border: solid #333;
    border-width: 1px 0 0 1px;
    transform: rotate(45deg);
}
.grid { width: 100%; border-collapse: collapse; table-layout: fixed; background: #fff; border-bottom: 1px solid #555; }
.grid th { height: 23px; padding: 0 3px; font-weight: normal; text-align: left; background: #f8f8f8; border-right: 1px solid #e4e4e4; white-space: nowrap; }
.grid td { height: 22px; padding: 0; border-right: 2px solid #777; }
.grid td:last-child, .grid td.num { border-right: 0; }
.grid .num { padding-left: 4px; background: #dcebf6; }
.grid input { width: 100%; height: 21px; padding: 0 3px 4px; }
.grid .combo { height: 21px; }
.grid .combo select { padding: 0 14px 0 3px; }
.grid .combo::after { right: 5px; }
.c-n { width: 25px; }
.c-nome { width: 41px; }
.c-cl { width: 88px; }
.c-co { width: 82px; }
.c-du { width: 137px; }
.btns { display: flex; gap: 3px; margin-top: 2px; }
.btn {
    display: flex;
    align-items: center;
    height: 21px;
    padding: 0 1px;
    background: #e4e4e4;
    border: 1px solid #adadad;
}
.btn:disabled { color: #aaa; background: #f4f4f4; border-color: #ededed; }

.combo.wide { height: 20px; border: 1px solid #c0c0c0; }
.name-row { display: flex; margin-top: 1px; height: 15px; }
.name-row label { width: 41px; }
.name-row input { flex: 1; background: #fff; border: 1px solid #ccc; }
.sub { height: 15px; }
.forces {
    display: grid;
    grid-template-columns: 24px 5fr 17px 24px 5fr 17px 25px 4fr 35px;
    height: 16px;
}
.forces input { min-width: 0; padding: 0 2px; background: #fff; border: 1px solid #ccc; }
.forces label { white-space: nowrap; overflow: hidden; }
.unit { background: #b9d8f4; border: 1px solid #5794cc; line-height: 13px; }
sub { font-size: 8px; line-height: 0; vertical-align: -2px; }
.puntoni { display: flex; height: 23px; padding: 3px 4px 0; background: #fff; border: 1px solid #aaa; }
.puntoni span { padding: 0 5px 0 1px; margin-right: 3px; }

/* drawing */
.pane-center .tabs { padding-top: 1px; }
.pane-center .tab { height: 26px; }
.pane-center .tab.active { height: 28px; }
.canvas { flex: 1; min-height: 0; }
.drawing { display: block; width: 100%; height: 100%; font-family: "Liberation Sans", sans-serif; }
.ruler { fill: #dbe7f4; }
.ticks { font: 12px "Liberation Sans", sans-serif; fill: #3a4350; }
.ticks .b { font-weight: bold; fill: #111; }
.tag { font-size: 11px; fill: #222; }
.load { font-size: 9px; fill: #222; }
.load path { fill: #e4e6ea; }
.load .deg { font-size: 11px; }
.mini { font-size: 6px; fill: #dff5df; }

/* report */
.pane-right .tabs { padding: 1px 0 0 1px; }
.pane-right .tab { height: 23px; padding: 0 8px 0 5px; }
.pane-right .tab.active { height: 25px; padding-right: 6px; }
.pane-right .tab > .ico { margin-right: 4px; }
.pane-right .tab .sq { width: 19px; height: 19px; }
.report { flex: 1; min-height: 0; display: flex; margin: 9px 3px 0 15px; }
.doc { flex: 1; min-width: 0; overflow: hidden; }
.doc h1 {
    margin: 14px 0 17px;
    font: bold 18px/20px "Liberation Serif", serif;
    color: #5b8fc4;
}
.rep {
    width: 542px;
    table-layout: fixed;
    border-collapse: collapse;
    font: 15px/18px "Liberation Sans", sans-serif;
}
.rep caption {
    padding-bottom: 2px;
    font: italic bold 14px/18px Lato, sans-serif;
    color: #5585c5;
    white-space: nowrap;
}
.rep th {
    padding: 0 0 0 1px;
    background: #d5d5d5;
    text-align: left;
    color: #111;
}
.rep th:nth-child(1) { width: 94px; }
.rep th:nth-child(2) { width: 65px; }
.rep th:nth-child(3) { width: 100px; }
.rep th:nth-child(4) { width: 121px; }
.rep td { height: 22px; padding: 0 0 0 1px; border-bottom: 1px solid #bbb; }
.rep td.bad { color: #e23b3b; }

.vscroll { width: 15px; display: flex; flex-direction: column; background: #f0f0f0; padding: 13px 0 15px; align-items: center; }
.vscroll svg, .hscroll svg { width: 11px; height: 12px; flex: none; }
.vscroll .thumb { width: 15px; height: 81px; margin: 6px 0 auto; background: #cdcdcd; }
.hscroll { display: flex; align-items: center; height: 14px; margin: 0 3px 8px 6px; padding: 0 30px 0 15px; background: #f0f0f0; }
.hscroll .thumb { width: 252px; height: 14px; margin: 0 auto 0 6px; background: #cdcdcd; }

/* status bar */
.status {
    display: flex;
    align-items: center;
    height: 24px;
    flex: none;
    padding: 9px 4px 1px;
    gap: 16px;
    background: #f1eeec;
}
.status a { color: #3a7cc4; }
.status .star { color: #e04040; font-weight: normal; }
.state { display: flex; align-items: center; gap: 5px; }
.led { width: 13px; height: 13px; border-radius: 50%; background: #b5b800; border: 1px solid #8a8c00; }
```
